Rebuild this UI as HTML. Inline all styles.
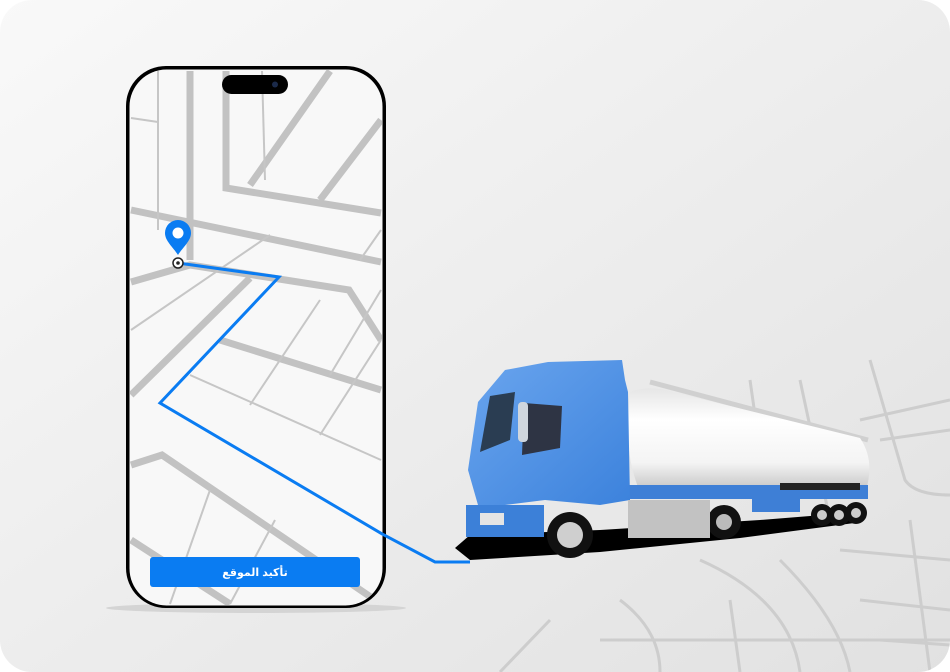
<!DOCTYPE html>
<html><head><meta charset="utf-8"><style>
html,body{margin:0;padding:0;background:#fff;}
.wrap{width:950px;height:672px;position:relative;overflow:hidden;}
</style></head><body><div class="wrap">
<svg width="950" height="672" viewBox="0 0 950 672" xmlns="http://www.w3.org/2000/svg">
<defs>
<linearGradient id="bg" x1="0" y1="0" x2="1" y2="1">
<stop offset="0" stop-color="#f9f9f9"/><stop offset="1" stop-color="#e1e1e1"/></linearGradient>
<clipPath id="scr"><rect x="130" y="70" width="252" height="535" rx="36"/></clipPath>
<clipPath id="card"><rect x="0" y="0" width="950" height="672" rx="32"/></clipPath>
<linearGradient id="tank" x1="0" y1="0" x2="0" y2="1"><stop offset="0" stop-color="#e6e6e6"/><stop offset="0.3" stop-color="#ffffff"/><stop offset="0.7" stop-color="#f4f4f4"/><stop offset="1" stop-color="#bdbdbd"/></linearGradient>
<linearGradient id="cab" x1="0" y1="0" x2="1" y2="1"><stop offset="0" stop-color="#6aa5ee"/><stop offset="1" stop-color="#3c82dc"/></linearGradient>
</defs>
<g clip-path="url(#card)">
<rect width="950" height="672" fill="url(#bg)"/>
<g stroke="#cdcdcd" stroke-width="3" fill="none">
<path d="M870 360 L905 480 Q915 495 950 495"/>
<path d="M860 420 L950 400"/><path d="M800 380 L830 520"/>
<path d="M700 560 Q790 600 800 672"/><path d="M780 560 Q840 620 850 672"/>
<path d="M620 600 Q660 630 660 672"/><path d="M840 550 L950 560"/>
<path d="M860 600 L950 610"/><path d="M880 640 L950 645"/>
<path d="M910 520 L930 672"/><path d="M730 600 L740 672"/>
<path d="M550 620 L500 672"/><path d="M600 640 L950 640"/>
<path d="M750 380 L760 450"/><path d="M880 440 L950 430"/>
</g>
<ellipse cx="256" cy="608" rx="150" ry="5" fill="#d4d4d4"/>
<rect x="126" y="66" width="260" height="542" rx="40" fill="#000"/>
<rect x="129.5" y="69.5" width="253" height="536" rx="37" fill="#f8f8f8"/>
<g clip-path="url(#scr)" fill="none">
<g stroke="#c2c2c2" stroke-width="7">
<path d="M190 71 L190 260"/><path d="M226 71 L226 188 L381 213"/>
<path d="M131 210 L381 262"/><path d="M131 282 L190 265 L349 290 L381 340"/>
<path d="M131 395 L250 278"/><path d="M220 340 L381 390"/>
<path d="M131 465 L162 455 L381 604"/><path d="M131 540 L230 604"/>
<path d="M250 185 L330 71"/><path d="M320 200 L381 120"/>
</g>
<g stroke="#c6c6c6" stroke-width="2">
<path d="M158 71 L158 230"/><path d="M131 118 L158 122"/>
<path d="M262 71 L265 180"/><path d="M131 330 L270 235"/>
<path d="M360 260 L381 230"/><path d="M190 375 L381 460"/>
<path d="M250 405 L320 300"/><path d="M320 435 L381 340"/>
<path d="M170 604 L210 490"/><path d="M230 604 L275 520"/>
<path d="M330 375 L381 290"/>
</g>
</g>
<rect x="222" y="75" width="66" height="19" rx="9.5" fill="#000"/>
<circle cx="275" cy="84.5" r="3" fill="#1b2a4a"/>
<path d="M178 263 L279 277 L160 403 L384 535 L435 562 L470 562" stroke="#0a7cf2" stroke-width="3" fill="none"/>
<path d="M178 220 a13 13 0 0 1 13 13 c0 8 -8 14 -13 22 c-5 -8 -13 -14 -13 -22 a13 13 0 0 1 13 -13z" fill="#0a7cf2"/>
<circle cx="178" cy="233" r="5.5" fill="#fff"/>
<circle cx="178" cy="263" r="5" fill="#fff" stroke="#222" stroke-width="1.5"/>
<circle cx="178" cy="263" r="1.8" fill="#222"/>
<rect x="150" y="557" width="210" height="30" rx="3" fill="#0a7cf2"/>
<text x="255" y="576" text-anchor="middle" fill="#fff" font-size="11" font-weight="bold" font-family="'Liberation Sans','DejaVu Sans',sans-serif">تأكيد الموقع</text>
<!-- truck -->
<path d="M455 548 L470 535 L600 530 L760 520 L860 512 L862 522 L740 538 L600 552 L470 560 Z" fill="#000"/>
<path d="M650 382 L868 440" stroke="#d0d0d0" stroke-width="5"/>
<path d="M630 392 Q645 386 665 390 L860 438 Q875 460 866 490 Q860 496 840 494 L640 492 Q622 450 630 392z" fill="url(#tank)"/>
<rect x="600" y="485" width="268" height="14" fill="#3e7fd6"/>
<rect x="780" y="483" width="80" height="7" fill="#222"/>
<path d="M752 499 L800 499 L800 512 L752 512z" fill="#3e7fd6"/>
<path d="M478 402 L505 370 L548 362 L622 360 L625 380 L628 392 L630 500 L600 505 L545 500 L505 505 L478 505 L468 470 Z" fill="url(#cab)"/>
<path d="M490 396 L515 392 L510 440 L480 452z" fill="#2a3d52"/>
<path d="M524 403 L562 406 L560 448 L522 455z" fill="#2e3444"/>
<rect x="518" y="402" width="10" height="40" rx="4" fill="#cfd6de"/>
<rect x="466" y="505" width="78" height="32" fill="#3c80d8"/>
<rect x="480" y="513" width="24" height="12" fill="#e4e4e4"/>
<circle cx="570" cy="535" r="23" fill="#111"/><circle cx="570" cy="535" r="13" fill="#cfcfcf"/>
<circle cx="724" cy="522" r="17" fill="#111"/><circle cx="724" cy="522" r="8" fill="#bbb"/>
<rect x="628" y="500" width="82" height="38" fill="#c2c2c2"/>
<circle cx="822" cy="515" r="11" fill="#111"/><circle cx="839" cy="515" r="11" fill="#111"/><circle cx="856" cy="513" r="11" fill="#111"/>
<circle cx="822" cy="515" r="5" fill="#ccc"/><circle cx="839" cy="515" r="5" fill="#ccc"/><circle cx="856" cy="513" r="5" fill="#ccc"/>
</g>
</svg>
</div></body></html>
